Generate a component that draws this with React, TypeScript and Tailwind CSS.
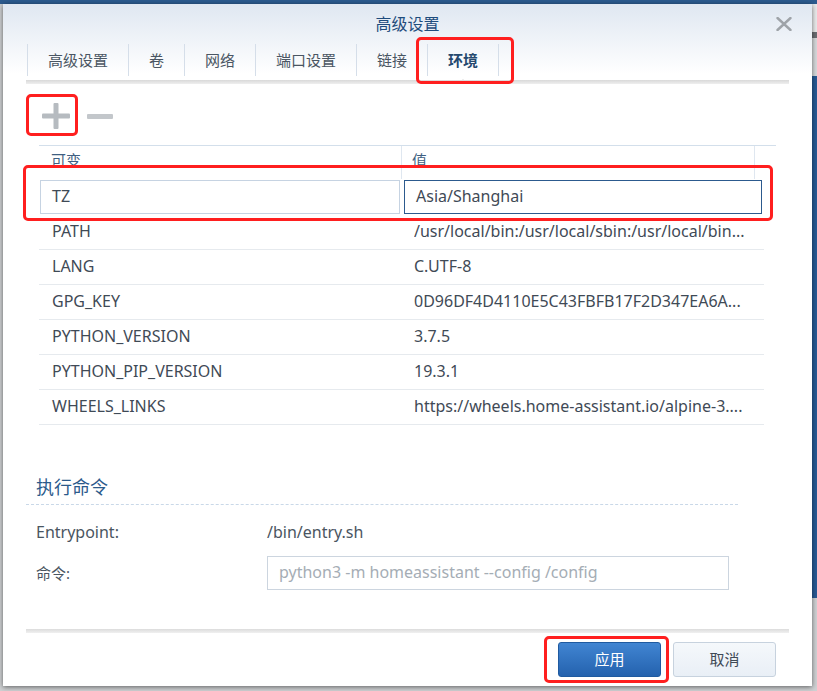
import React from 'react';

const tabs = ['高级设置', '卷', '网络', '端口设置', '链接', '环境'];

const envRows: [string, string][] = [
  ['PATH', '/usr/local/bin:/usr/local/sbin:/usr/local/bin...'],
  ['LANG', 'C.UTF-8'],
  ['GPG_KEY', '0D96DF4D4110E5C43FBFB17F2D347EA6A...'],
  ['PYTHON_VERSION', '3.7.5'],
  ['PYTHON_PIP_VERSION', '19.3.1'],
  ['WHEELS_LINKS', 'https://wheels.home-assistant.io/alpine-3....'],
];

const PlusIcon = () => (
  <svg width="28" height="26" viewBox="0 0 28 26">
    <rect x="11.5" y="0" width="5" height="26" rx="1" fill="#b6bbc0" />
    <rect x="0" y="10.5" width="28" height="5" rx="1" fill="#b6bbc0" />
  </svg>
);

const MinusIcon = () => (
  <svg width="26" height="5" viewBox="0 0 26 5">
    <rect x="0" y="0" width="26" height="5" rx="1" fill="#c3c7cb" />
  </svg>
);

const CloseIcon = () => (
  <svg width="16" height="14" viewBox="0 0 16 14">
    <path d="M1.5 1 L14.5 13 M14.5 1 L1.5 13" stroke="#9ea3a8" strokeWidth="2.4" strokeLinecap="round" />
  </svg>
);

// red markup boxes drawn on top of the screenshot
const Mark = ({ className }: { className: string }) => (
  <div className={`absolute border-[3px] border-[#ff1f1f] rounded-[5px] pointer-events-none ${className}`} />
);

export default function App() {
  return (
    <div className="relative w-[817px] h-[691px] overflow-hidden bg-[#cfd1d3] font-['Noto_Sans','Noto_Sans_CJK_SC',sans-serif]">
      {/* desktop behind the window */}
      <div className="absolute left-0 top-0 w-full h-[4px] bg-[#2c5b8f]" />
      <div className="absolute right-0 top-[4px] w-[5px] h-[28px] bg-[#e9eaeb]" />
      <div className="absolute right-0 top-[32px] w-[5px] h-[6px] bg-[#6b6e72]" />
      <div className="absolute right-0 top-[38px] w-[5px] h-[38px] bg-[#d7d9db]" />
      <div className="absolute right-0 top-[76px] w-[5px] h-[522px] bg-[#285a94]" />

      {/* dialog window */}
      <div className="absolute left-[3px] top-[4px] w-[809px] h-[682px] bg-white shadow-[0_1px_5px_rgba(0,0,0,0.55)] flex flex-col">
        <div className="bg-[linear-gradient(to_bottom,#dfe7f1,#ffffff_70px)]">
          <div className="relative h-[36px] flex items-center justify-center">
            <span className="text-[16px] text-[#1e4c7d] pt-[4px]">高级设置</span>
            <div className="absolute right-[20px] top-[13px]">
              <CloseIcon />
            </div>
          </div>
          <div className="mx-[23px] mt-[4px]">
            <div className="flex h-[32px] pl-[1px]">
              {tabs.map((t, i) => {
                const active = i === tabs.length - 1;
                return (
                  <div
                    key={t}
                    className={`relative flex items-center px-[20px] border-l border-[#d5dee9] text-[15px] ${
                      active ? 'border-r font-bold text-[#25496f]' : 'text-[#4a5663]'
                    }`}
                  >
                    {t}
                    {active && (
                      <div className="absolute left-1/2 -translate-x-1/2 bottom-[-8px] w-0 h-0 border-l-[5px] border-r-[5px] border-b-[5px] border-l-transparent border-r-transparent border-b-[#dcdcdc]" />
                    )}
                  </div>
                );
              })}
            </div>
            <div className="mt-[4px] h-[4px] bg-[linear-gradient(to_bottom,#d9d9d9,#efefef)]" />
          </div>
        </div>

        <div className="flex-1 flex flex-col">
          <div className="flex items-center gap-[17px] ml-[39px] mt-[19px] h-[26px]">
            <PlusIcon />
            <MinusIcon />
          </div>

          {/* environment table */}
          <div className="ml-[36px] mt-[16px] w-[737px]">
            <div className="flex h-[34px] border-t border-[#d3dfeb] text-[15px] text-[#3f5f82]">
              <div className="w-[363px] pl-[12px] pt-[3px] border-r border-[#dfe7f0]">可变</div>
              <div className="w-[353px] pl-[10px] pt-[3px] border-r border-[#dfe7f0]">值</div>
              <div className="flex-1" />
            </div>
            <div className="w-[725px]">
              <div className="flex gap-[4px] pl-[1px] h-[36px] py-[1px] text-[16px] text-[#3f4a56]">
                <div className="w-[360px] border border-[#c6d3e2] flex items-center pl-[11px] pb-[2px]">TZ</div>
                <div className="w-[358px] border border-[#2c5a8e] flex items-center pl-[11px] pb-[2px]">Asia/Shanghai</div>
              </div>
              {envRows.map(([k, v]) => (
                <div key={k} className="flex h-[35px] border-b border-[#e6eaee] text-[16px] text-[#3f4a56]">
                  <div className="w-[375px] pl-[13px] flex items-center pb-[3px]">{k}</div>
                  <div className="flex-1 flex items-center pb-[3px] whitespace-nowrap overflow-hidden">{v}</div>
                </div>
              ))}
            </div>
          </div>

          {/* command section */}
          <div className="ml-[23px] mt-[50px] w-[712px]">
            <div className="pl-[10px] text-[18px] text-[#2b5a8b] leading-[24px]">执行命令</div>
            <div className="mt-[5px] border-b border-dashed border-[#c9d8e8]" />
            <div className="flex items-center h-[24px] mt-[15px] pl-[10px] text-[16px] text-[#4a5561]">
              <div className="w-[231px]">Entrypoint:</div>
              <div>/bin/entry.sh</div>
            </div>
            <div className="flex items-center mt-[12px] pl-[10px] text-[16px] text-[#4a5561]">
              <div className="w-[231px] text-[15px]">命令:</div>
              <div className="w-[462px] h-[34px] border border-[#ccd5df] flex items-center pl-[11px] pb-[2px] text-[#a5adb5]">
                python3 -m homeassistant --config /config
              </div>
            </div>
          </div>
        </div>

        {/* footer */}
        <div className="mx-[23px] h-[4px] bg-[linear-gradient(to_bottom,#dcdcdc,#f0f0f0)]" />
        <div className="flex justify-end gap-[12px] pr-[36px] pt-[9px] pb-[9px]">
          <button className="w-[103px] h-[35px] rounded-[3px] border border-[#1f5aa0] bg-[linear-gradient(to_bottom,#4185d2,#2462ae)] text-white text-[15px]">
            应用
          </button>
          <button className="w-[103px] h-[35px] rounded-[3px] border border-[#c7d2de] bg-[linear-gradient(to_bottom,#f5f8fb,#e9eff6)] text-[#3f4a56] text-[15px]">
            取消
          </button>
        </div>
      </div>

      <Mark className="left-[416px] top-[37px] w-[98px] h-[47px]" />
      <Mark className="left-[26px] top-[94px] w-[52px] h-[42px]" />
      <Mark className="left-[23px] top-[165px] w-[750px] h-[56px]" />
      <Mark className="left-[544px] top-[636px] w-[125px] h-[47px]" />
    </div>
  );
}
